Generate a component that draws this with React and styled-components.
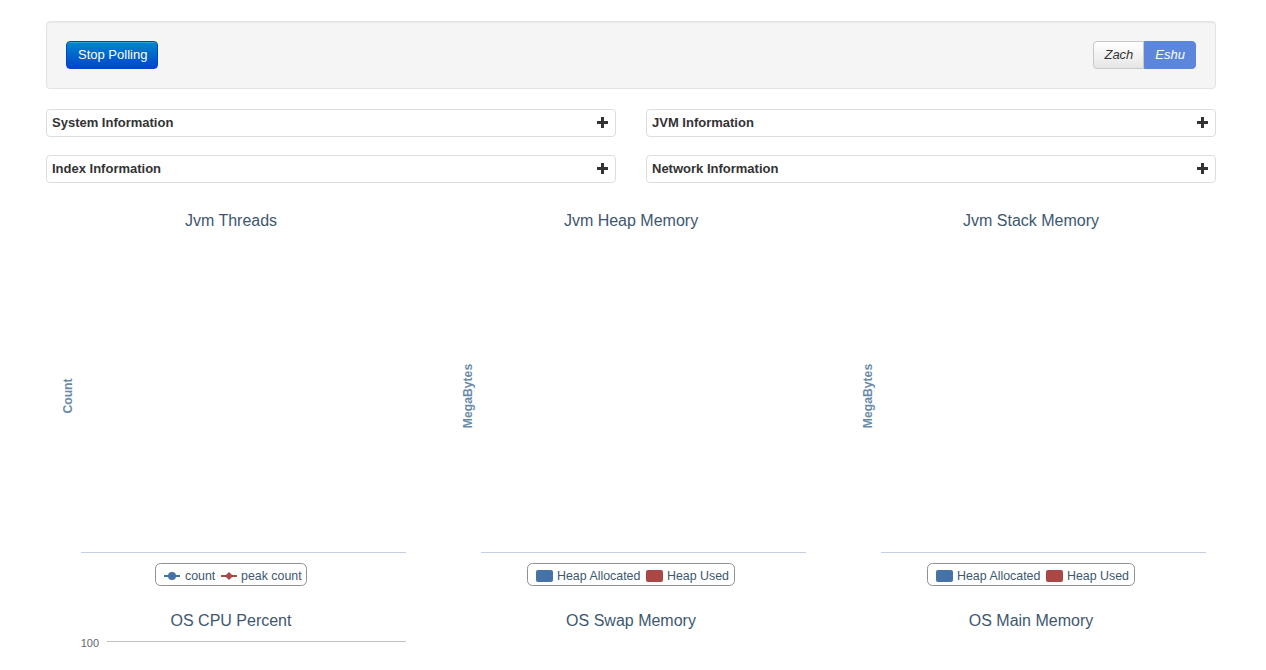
import React from 'react';
import styled, { createGlobalStyle } from 'styled-components';

const GlobalStyle = createGlobalStyle`
    html, body {
        margin: 0;
        padding: 0;
        background: #fff;
        overflow: hidden;
    }

    body {
        font-family: "Liberation Sans", Arial, sans-serif;
        font-size: 13px;
        color: #333;
    }
`;

const Page = styled.div`
    width: 1170px;
    padding: 21px 0 0 46px;
`;

const Well = styled.section`
    display: flex;
    justify-content: space-between;
    align-items: center;
    height: 66px;
    padding: 0 19px;
    background: #f5f5f5;
    border: 1px solid #e3e3e3;
    border-radius: 4px;
    box-shadow: inset 0 1px 1px rgba(0, 0, 0, .05);
`;

const PrimaryButton = styled.button`
    height: 28px;
    padding: 0 10px 1px 11px;
    font-family: inherit;
    font-size: 13px;
    color: #fff;
    background: linear-gradient(to bottom, #0088cc, #0044cc);
    border: 1px solid #0044cc;
    border-radius: 4px;
    box-shadow: inset 0 1px 0 rgba(255, 255, 255, .2);
    cursor: pointer;
`;

const UserGroup = styled.div`
    display: flex;
`;

const UserButton = styled.button`
    height: 28px;
    padding: 0 10px 1px;
    font-family: inherit;
    font-size: 13px;
    font-style: italic;
    color: ${props => (props.$active ? '#fff' : '#333')};
    background: ${props => (props.$active ? '#5b86db' : 'linear-gradient(to bottom, #ffffff, #e6e6e6)')};
    border: 1px solid ${props => (props.$active ? '#5b86db' : '#c8c8c8')};
    border-radius: ${props => (props.$first ? '4px 0 0 4px' : '0 4px 4px 0')};
    cursor: pointer;
`;

const PanelGrid = styled.section`
    display: grid;
    grid-template-columns: 570px 570px;
    column-gap: 30px;
    row-gap: 18px;
    margin-top: 20px;
`;

const Panel = styled.div`
    display: flex;
    justify-content: space-between;
    align-items: center;
    height: 25px;
    padding: 0 7px 1px 5px;
    border: 1px solid #ddd;
    border-radius: 4px;
    font-weight: bold;
    font-size: 13px;
    color: #333;

    svg {
        margin-top: -1px;
    }
`;

const ChartRow = styled.section`
    display: grid;
    grid-template-columns: repeat(3, 400px);
    margin: 17px 0 0 -15px;
`;

const ChartSvg = styled.svg`
    display: block;
    width: 400px;
    height: 400px;
    font-family: "Liberation Sans", Arial, sans-serif;
`;

const ChartTitle = styled.text`
    font-size: 16px;
    fill: #3e576f;
    text-anchor: middle;
`;

const AxisTitle = styled.text`
    font-size: 12.2px;
    font-weight: bold;
    fill: #6a8aaa;
    text-anchor: middle;
`;

const LegendLabel = styled.text`
    font-size: 12.4px;
    fill: #3e576f;
`;

const TickLabel = styled.text`
    font-size: 11px;
    fill: #666;
    text-anchor: end;
`;

const LegendBox = styled.rect`
    fill: #fff;
    stroke: #909090;
`;

const colors = { blue: '#4572a7', red: '#aa4643' };

function Plus() {
    return (
        <svg width="11" height="11" viewBox="0 0 11 11">
            <path d="M4 0h3v4h4v3H7v4H4V7H0V4h4z" fill="#333" />
        </svg>
    );
}

function ThreadsLegend() {
    return (
        <g>
            <LegendBox x="124.5" y="363.5" width="151" height="22" rx="5" />
            <line x1="133" x2="149" y1="376" y2="376" stroke={colors.blue} strokeWidth="2" />
            <circle cx="141" cy="376" r="4" fill={colors.blue} />
            <LegendLabel x="154" y="380">count</LegendLabel>
            <line x1="190" x2="206" y1="376" y2="376" stroke={colors.red} strokeWidth="2" />
            <path d="M198 372l4 4-4 4-4-4z" fill={colors.red} />
            <LegendLabel x="210" y="380">peak count</LegendLabel>
        </g>
    );
}

function HeapLegend() {
    return (
        <g>
            <LegendBox x="96.5" y="363.5" width="207" height="22" rx="5" />
            <rect x="105" y="370" width="17" height="12" rx="2" fill={colors.blue} />
            <LegendLabel x="126" y="380">Heap Allocated</LegendLabel>
            <rect x="215" y="370" width="17" height="12" rx="2" fill={colors.red} />
            <LegendLabel x="236" y="380">Heap Used</LegendLabel>
        </g>
    );
}

function LineChart({ title, yTitle, legend }) {
    return (
        <ChartSvg viewBox="0 0 400 400">
            <ChartTitle x="200" y="26">{title}</ChartTitle>
            <AxisTitle transform="translate(41 196) rotate(-90)">{yTitle}</AxisTitle>
            <line x1="50" x2="375" y1="352.5" y2="352.5" stroke="#c0d0e0" />
            {legend === 'threads' ? <ThreadsLegend /> : <HeapLegend />}
        </ChartSvg>
    );
}

function OsChart({ title, showGrid }) {
    return (
        <ChartSvg viewBox="0 0 400 400">
            <ChartTitle x="200" y="26">{title}</ChartTitle>
            {showGrid && (
                <g>
                    <TickLabel x="68" y="47">100</TickLabel>
                    <line x1="76" x2="375" y1="41.5" y2="41.5" stroke="#c0c0c0" />
                </g>
            )}
        </ChartSvg>
    );
}

const panels = ['System Information', 'JVM Information', 'Index Information', 'Network Information'];

function App() {
    return (
        <Page>
            <GlobalStyle />
            <Well>
                <PrimaryButton>Stop Polling</PrimaryButton>
                <UserGroup>
                    <UserButton $first>Zach</UserButton>
                    <UserButton $active>Eshu</UserButton>
                </UserGroup>
            </Well>

            <PanelGrid>
                {panels.map(name => (
                    <Panel key={name}>
                        {name}
                        <Plus />
                    </Panel>
                ))}
            </PanelGrid>

            <ChartRow>
                <LineChart title="Jvm Threads" yTitle="Count" legend="threads" />
                <LineChart title="Jvm Heap Memory" yTitle="MegaBytes" legend="heap" />
                <LineChart title="Jvm Stack Memory" yTitle="MegaBytes" legend="heap" />
                <OsChart title="OS CPU Percent" showGrid />
                <OsChart title="OS Swap Memory" />
                <OsChart title="OS Main Memory" />
            </ChartRow>
        </Page>
    );
}

export default App;
